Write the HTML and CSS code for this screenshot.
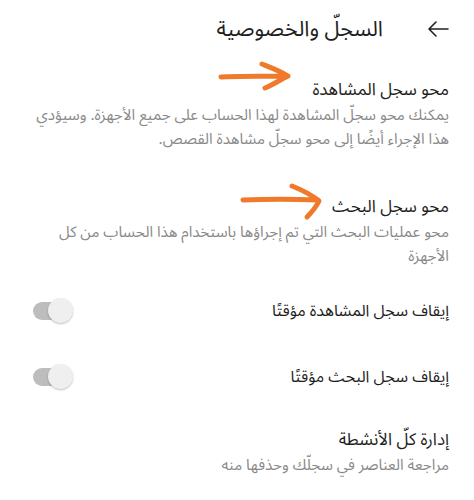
FILE: index.html
```html
<!DOCTYPE html>
<html lang="ar" dir="rtl">
<head>
<meta charset="utf-8">
<link rel="stylesheet" href="styles.css">
</head>
<body>
<div class="page">
  <header class="bar">
    <svg class="back" width="22" height="16" viewBox="0 0 22 16"><path d="M21 8H2M9 1L2 8l7 7" fill="none" stroke="#222" stroke-width="1.6" stroke-linecap="round" stroke-linejoin="round"/></svg>
    <h1 class="bar-title">السجلّ والخصوصية</h1>
  </header>

  <section class="item item-first">
    <h2 class="item-title">محو سجل المشاهدة</h2>
    <p class="item-desc">يمكنك محو سجلّ المشاهدة لهذا الحساب على جميع الأجهزة. وسيؤدي هذا الإجراء أيضًا إلى محو سجلّ مشاهدة القصص.</p>
    <svg class="mark mark-1" width="80" height="34" viewBox="0 0 80 34"><path d="M3 18C25 17 48 17 70 17M44 5C54 9 62 12 70 17C62 21 54 26 47 29" fill="none" stroke="#f07a2c" stroke-width="5" stroke-linecap="round" stroke-linejoin="round"/></svg>
  </section>

  <section class="item item-second">
    <h2 class="item-title">محو سجل البحث</h2>
    <p class="item-desc">محو عمليات البحث التي تم إجراؤها باستخدام هذا الحساب من كل الأجهزة</p>
    <svg class="mark mark-2" width="86" height="46" viewBox="0 0 86 46"><path d="M3 25C30 24 50 24 78 25M52 11C62 15 72 20 79 26C76 32 71 38 67 42" fill="none" stroke="#f07a2c" stroke-width="5" stroke-linecap="round" stroke-linejoin="round"/></svg>
  </section>

  <div class="toggle-row toggle-first">
    <span class="toggle-label">إيقاف سجل المشاهدة مؤقتًا</span>
    <span class="switch"><span class="knob"></span></span>
  </div>

  <div class="toggle-row toggle-second">
    <span class="toggle-label">إيقاف سجل البحث مؤقتًا</span>
    <span class="switch"><span class="knob"></span></span>
  </div>

  <section class="item item-last">
    <h2 class="item-title">إدارة كلّ الأنشطة</h2>
    <p class="item-desc">مراجعة العناصر في سجلّك وحذفها منه</p>
  </section>
</div>
</body>
</html>
```

FILE: styles.css
```css
html, body {
  margin: 0;
  padding: 0;
  background: #ffffff;
}
body {
  font-family: "Noto Sans Arabic", "Noto Sans", "DejaVu Sans", sans-serif;
  color: #1e1e1e;
  width: 474px;
  height: 500px;
  overflow: hidden;
}
.page {
  padding: 0 25px;
}
.bar {
  display: flex;
  align-items: center;
  height: 58px;
  gap: 44px;
}
.back {
  display: block;
  flex: none;
}
.bar-title {
  margin: 0;
  font-size: 21.5px;
  line-height: 30px;
  font-weight: 400;
  color: #1e1e1e;
}
.item {
  position: relative;
}
.item-first {
  margin-top: 19px;
}
.item-second {
  margin-top: 43px;
}
.item-last {
  margin-top: 30px;
}
.item-title {
  margin: 0;
  font-size: 17px;
  font-weight: 400;
  line-height: 26px;
  color: #1e1e1e;
}
.item-desc {
  margin: 0;
  font-size: 15.2px;
  line-height: 24px;
  color: #8a8a8a;
}
.mark {
  position: absolute;
  display: block;
}
.mark-1 {
  left: 193px;
  top: -18px;
}
.mark-2 {
  left: 215px;
  top: -19px;
}
.toggle-row {
  display: flex;
  align-items: center;
  justify-content: space-between;
  height: 40px;
}
.toggle-first {
  margin-top: 23px;
}
.toggle-second {
  margin-top: 26px;
}
.toggle-label {
  font-size: 16px;
  line-height: 26px;
  color: #1e1e1e;
}
.switch {
  position: relative;
  width: 39px;
  height: 18px;
  margin-left: 8px;
  border-radius: 9px;
  background: #bdbdbd;
  display: block;
}
.knob {
  position: absolute;
  right: -1px;
  top: -4px;
  width: 25px;
  height: 25px;
  border-radius: 50%;
  background: #efefef;
  box-shadow: 0 1px 2px rgba(0,0,0,0.25);
}
```
